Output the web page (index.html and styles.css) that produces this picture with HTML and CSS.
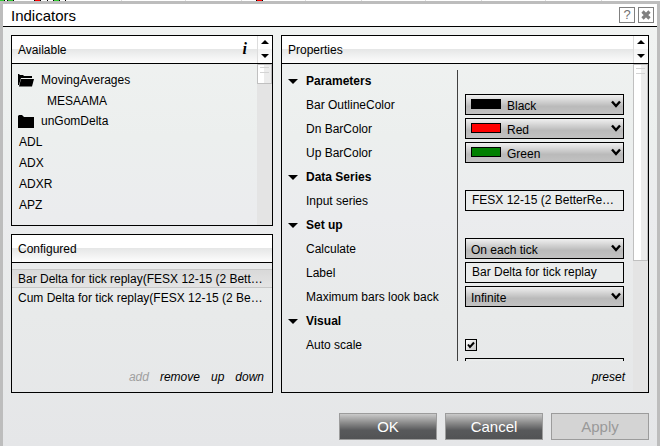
FILE: index.html
```html
<!DOCTYPE html>
<html lang="en">
<head>
<meta charset="utf-8">
<title>Indicators</title>
<link rel="stylesheet" href="styles.css">
</head>
<body>
<svg class="chart" aria-hidden="true" shape-rendering="crispEdges">
  <g fill="#32cd32"><rect x="0" width="4" height="1"/><rect x="8" width="5" height="1"/><rect x="54" width="5" height="1"/></g>
  <g fill="#f00"><rect x="35" width="5" height="1"/><rect x="257" width="5" height="1"/></g>
  <g fill="#000"><rect x="4" width="1" height="1"/><rect x="7" width="1" height="1"/><rect x="13" width="1" height="1"/><rect x="34" width="1" height="1"/><rect x="40" width="1" height="1"/><rect x="47" width="1" height="1"/><rect x="53" width="1" height="1"/><rect x="59" width="1" height="1"/><rect x="65" width="1" height="1"/><rect x="256" width="1" height="1"/><rect x="262" width="1" height="1"/></g>
  <g fill="#ddd"><rect x="121" width="1" height="1"/><rect x="185" width="1" height="1"/><rect x="241" width="1" height="1"/><rect x="305" width="1" height="1"/><rect x="361" width="1" height="1"/><rect x="425" width="1" height="1"/><rect x="481" width="1" height="1"/><rect x="545" width="1" height="1"/><rect x="601" width="1" height="1"/></g>
</svg>
<div class="dialog" role="dialog" aria-labelledby="title">
  <header class="titlebar">
    <h1 id="title">Indicators</h1>
    <button class="tool" type="button">?</button>
    <button class="tool" type="button" aria-label="Close"><svg width="10" height="10" viewBox="0 0 10 10"><path d="M1.5 1.5 8.5 8.5M8.5 1.5 1.5 8.5" stroke="#808080" stroke-width="3.2"/></svg></button>
  </header>

  <main class="panels">
    <div class="left">
      <section class="panel">
        <header class="head">
          <h2>Available</h2>
          <button class="info" type="button">i</button>
          <div class="spin">
            <button type="button" aria-label="Previous"><svg width="8" height="4" viewBox="0 0 8 4"><path d="M0 4 4 0 8 4Z"/></svg></button>
            <button type="button" aria-label="Next"><svg width="8" height="4" viewBox="0 0 8 4"><path d="M0 0 4 4 8 0Z"/></svg></button>
          </div>
        </header>
        <div class="body">
          <ul class="tree">
            <li class="folder"><svg width="16" height="13" viewBox="0 0 16 13"><path d="M0 0H1L2 1H5L6 2H14V4H3L1 11H0Z"/><path d="M3 5H16L14 12.500H1Z"/></svg>MovingAverages</li>
            <li class="child">MESAAMA</li>
            <li class="folder"><svg width="16" height="13" viewBox="0 0 16 13"><path d="M0 1 1 0H4L6 2H16V13H0Z"/></svg>unGomDelta</li>
            <li>ADL</li>
            <li>ADX</li>
            <li>ADXR</li>
            <li>APZ</li>
          </ul>
          <div class="track"><div class="thumb small"></div></div>
        </div>
      </section>

      <section class="panel">
        <header class="head"><h2>Configured</h2></header>
        <div class="column">
          <ul class="configured">
            <li class="selected">Bar Delta for tick replay(FESX 12-15 (2 Bett…</li>
            <li>Cum Delta for tick replay(FESX 12-15 (2 Be…</li>
          </ul>
          <div class="actions">
            <button type="button" disabled>add</button>
            <button type="button">remove</button>
            <button type="button">up</button>
            <button type="button">down</button>
          </div>
        </div>
      </section>
    </div>

    <section class="panel">
      <header class="head">
        <h2>Properties</h2>
        <div class="spin">
          <button type="button" aria-label="Previous"><svg width="8" height="4" viewBox="0 0 8 4"><path d="M0 4 4 0 8 4Z"/></svg></button>
          <button type="button" aria-label="Next"><svg width="8" height="4" viewBox="0 0 8 4"><path d="M0 0 4 4 8 0Z"/></svg></button>
        </div>
      </header>
      <div class="body">
        <div class="column">
          <div class="props">
            <div class="row"><button class="group" type="button"><svg width="10" height="5" viewBox="0 0 10 5"><path d="M0 0H10L5 5Z"/></svg>Parameters</button><div class="value"></div></div>
            <div class="row"><label for="outline">Bar OutlineColor</label><div class="value"><div class="combo color"><select id="outline"><option>Black</option></select><span class="swatch black"></span><svg class="chevron" width="10" height="8" viewBox="0 0 10 8"><path d="M1 1.500 5 6 9 1.500"/></svg></div></div></div>
            <div class="row"><label for="dn">Dn BarColor</label><div class="value"><div class="combo color"><select id="dn"><option>Red</option></select><span class="swatch red"></span><svg class="chevron" width="10" height="8" viewBox="0 0 10 8"><path d="M1 1.500 5 6 9 1.500"/></svg></div></div></div>
            <div class="row"><label for="up">Up BarColor</label><div class="value"><div class="combo color"><select id="up"><option>Green</option></select><span class="swatch green"></span><svg class="chevron" width="10" height="8" viewBox="0 0 10 8"><path d="M1 1.500 5 6 9 1.500"/></svg></div></div></div>
            <div class="row"><button class="group" type="button"><svg width="10" height="5" viewBox="0 0 10 5"><path d="M0 0H10L5 5Z"/></svg>Data Series</button><div class="value"></div></div>
            <div class="row"><label for="series">Input series</label><div class="value"><input class="field" id="series" type="text" value="FESX 12-15 (2 BetterRe…"></div></div>
            <div class="row"><button class="group" type="button"><svg width="10" height="5" viewBox="0 0 10 5"><path d="M0 0H10L5 5Z"/></svg>Set up</button><div class="value"></div></div>
            <div class="row"><label for="calc">Calculate</label><div class="value"><div class="combo"><select id="calc"><option>On each tick</option></select><svg class="chevron" width="10" height="8" viewBox="0 0 10 8"><path d="M1 1.500 5 6 9 1.500"/></svg></div></div></div>
            <div class="row"><label for="label">Label</label><div class="value"><input class="field" id="label" type="text" value="Bar Delta for tick replay"></div></div>
            <div class="row"><label for="look">Maximum bars look back</label><div class="value"><div class="combo"><select id="look"><option>Infinite</option></select><svg class="chevron" width="10" height="8" viewBox="0 0 10 8"><path d="M1 1.500 5 6 9 1.500"/></svg></div></div></div>
            <div class="row"><button class="group" type="button"><svg width="10" height="5" viewBox="0 0 10 5"><path d="M0 0H10L5 5Z"/></svg>Visual</button><div class="value"></div></div>
            <div class="row"><label for="scale">Auto scale</label><div class="value"><span class="check"><input id="scale" type="checkbox" checked><svg width="8" height="8" viewBox="0 0 8 8"><path d="M1 3.500 3 6 7 1.500"/></svg></span></div></div>
            <div class="row"><span></span><div class="value"><div class="field"></div></div></div>
          </div>
          <div class="actions"><button type="button">preset</button></div>
        </div>
        <div class="track"><div class="thumb"></div></div>
      </div>
    </section>
  </main>

  <footer class="buttons">
    <button type="button">OK</button>
    <button type="button">Cancel</button>
    <button type="button" disabled>Apply</button>
  </footer>
</div>
</body>
</html>
```
FILE: styles.css
```css
* { box-sizing: border-box; }

body {
  margin: 0;
  height: 100vh;
  display: flex;
  flex-direction: column;
  overflow: hidden;
  background: #fff;
  color: #000;
  font: 12px/21px "Liberation Sans", Arial, sans-serif;
}

h1, h2, ul { margin: 0; padding: 0; font-weight: normal; list-style: none; }
button, input, select { font: inherit; color: inherit; margin: 0; border-radius: 0; }
button { padding: 0; border: 0; background: none; }
svg { display: block; flex: none; }

.chart { width: 100%; height: 1px; }

.dialog {
  flex: 1;
  min-height: 0;
  display: flex;
  flex-direction: column;
  border: 3px solid #bdbdbd;
  border-bottom: 0;
  background: linear-gradient(#f1f3f2, #ecefee 30%, #ebecee 48%, #e8eaea 70%, #e5e6e8);
}

.titlebar {
  display: flex;
  align-items: center;
  gap: 3px;
  height: 23px;
  padding: 0 3px 0 8px;
  border-bottom: 1px solid #000;
  background: #fff;
}
.titlebar h1 { flex: 1; font-size: 15px; }
.tool {
  display: flex;
  align-items: center;
  justify-content: center;
  width: 16px;
  height: 16px;
  border: 1px solid #808080;
  color: #707070;
  font-size: 13px;
  line-height: 14px;
}

.panels {
  flex: 1;
  min-height: 0;
  display: grid;
  grid-template-columns: 262fr 368fr;
  gap: 8px;
  padding: 8px 8px 0;
}
.left { display: grid; grid-template-rows: 191fr 159fr; gap: 8px; min-height: 0; }
.panel {
  display: flex;
  flex-direction: column;
  min-width: 0;
  min-height: 0;
  border: 1px solid #000;
}
.head {
  flex: none;
  display: flex;
  align-items: center;
  height: 28px;
  padding-left: 6px;
  border-bottom: 1px solid #000;
  background: linear-gradient(#fff 49%, #e6e7e7 50%, #fdfdfd);
}
.head h2 { flex: 1; padding-top: 2px; font-size: 12px; }
.info {
  margin-right: 10px;
  padding-bottom: 2px;
  font: italic bold 16px/21px "Liberation Serif", serif;
}
.spin {
  display: flex;
  flex-direction: column;
  justify-content: space-between;
  width: 15px;
  height: 27px;
  padding: 4px 0 5px 3px;
  border-left: 1px solid #ddd;
  background: linear-gradient(#fff 49%, #f3f3f3 50%, #fff);
}

.body { flex: 1; display: flex; min-height: 0; }
.column { flex: 1; display: flex; flex-direction: column; min-width: 0; min-height: 0; }

.tree { flex: 1; overflow: hidden; padding: 6px 0 0 7px; }
.tree .folder { display: flex; align-items: center; gap: 7px; margin-left: -1px; }
.tree .child { padding-left: 28px; line-height: 20px; }

.track { flex: none; width: 15px; background: #e4e4e4; }
.thumb {
  height: 197px;
  padding: 3px 2px 0;
  border: 1px solid #c0c0c0;
  background: linear-gradient(90deg, #fff 50%, #ececec 50%);
}
.thumb::before {
  content: "";
  display: block;
  height: 4px;
  border: solid #d4d4d4;
  border-width: 1px 0;
}
.thumb.small { height: 20px; padding-top: 2px; }

.configured { flex: 1; overflow: hidden; padding-top: 6px; line-height: 17px; }
.configured li { padding: 2px 6px 0; white-space: nowrap; }
.configured .selected {
  padding-top: 1px;
  border: solid #c8c8c8;
  border-width: 1px 0;
  line-height: 16px;
  background: linear-gradient(#d9d9d9, #e4e4e4);
}
.actions {
  flex: none;
  display: flex;
  justify-content: flex-end;
  align-items: center;
  gap: 11px;
  height: 31px;
  padding: 1px 8px 0 0;
  font-style: italic;
}
.actions :disabled { color: #a0a0a0; }

.props { flex: 1; min-height: 0; overflow: hidden; margin-top: 6px; }
.row {
  display: grid;
  grid-template-columns: 175fr 176fr;
  height: 24px;
  line-height: 23px;
  white-space: nowrap;
}
.row label { padding-left: 24px; }
.group {
  display: flex;
  align-items: center;
  gap: 8px;
  height: 23px;
  padding-left: 6px;
  font-weight: bold;
}
.value { padding: 0 9px 0 7px; border-left: 1px solid #404040; }

.field {
  display: block;
  width: 100%;
  height: 21px;
  padding: 0 6px;
  border: 1px solid #000;
  background: #eaecec;
}
.combo { position: relative; }
.combo select {
  display: block;
  width: 100%;
  height: 21px;
  padding: 0 20px 0 5px;
  border: 1px solid #000;
  appearance: none;
  background: linear-gradient(#f0f0f0, #bababa 60%, #c2c2c2);
}
.combo.color select { padding-left: 41px; }
.swatch {
  position: absolute;
  left: 6px;
  top: 5px;
  width: 30px;
  height: 10px;
  border: 1px solid #000;
  pointer-events: none;
}
.black { background: #000; }
.red { background: #f00; }
.green { background: #008000; }
.chevron { position: absolute; right: 3px; top: 6px; pointer-events: none; }
.chevron path { fill: none; stroke: #000; stroke-width: 2.4; }

.check { position: relative; display: flex; align-items: center; height: 21px; }
.check input {
  width: 12px;
  height: 12px;
  border: 1px solid #000;
  appearance: none;
  background: linear-gradient(135deg, #fff, #c4c4c4);
}
.check svg { position: absolute; left: 2px; pointer-events: none; }
.check path { fill: none; stroke: #000; stroke-width: 2; }

.buttons {
  flex: none;
  display: flex;
  justify-content: flex-end;
  gap: 8px;
  padding: 20px 8px 6px;
}
.buttons button {
  width: 98px;
  height: 27px;
  border: 1px solid #9c9c9c;
  color: #fff;
  font-size: 15px;
  background: linear-gradient(#cacaca, #8c8c8c 35%, #58595b 65%, #525355);
}
.buttons :disabled { color: #999; background: #d4d4d4; }
```
